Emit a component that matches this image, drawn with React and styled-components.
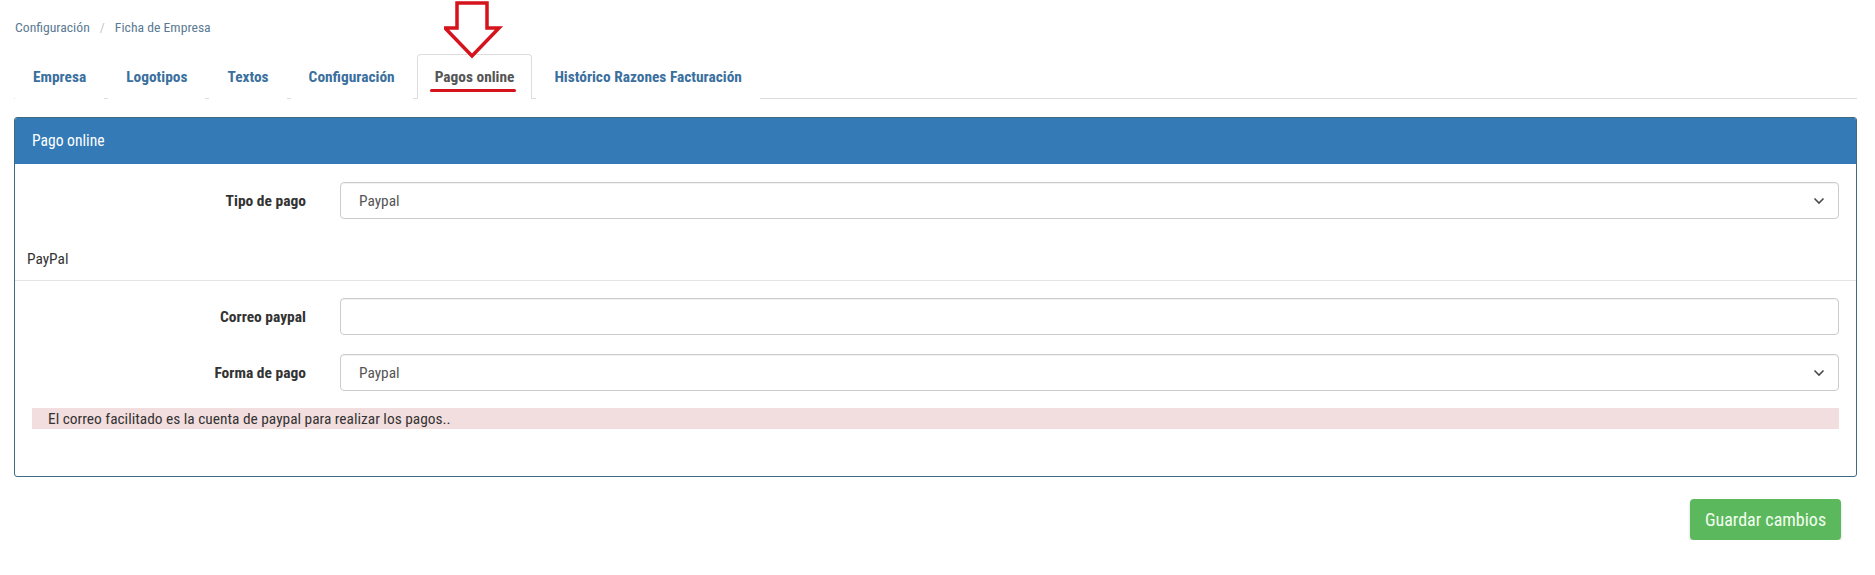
import React from "react";
import styled, { createGlobalStyle } from "styled-components";

const Global = createGlobalStyle`
  html, body { margin: 0; padding: 0; background: #fff; }
  body { font-family: "Roboto Condensed", Roboto, "Liberation Sans", sans-serif; color: #333; }
  * { box-sizing: border-box; }
`;

const Page = styled.div`
  padding: 0 18px 0 14px;
  width: 1875px;
`;

const Breadcrumb = styled.div`
  height: 54px;
  display: flex;
  align-items: center;
  gap: 10px;
  font-size: 13.7px;
  color: #5b7a93;
  padding-left: 1px;
`;

const Sep = styled.span`
  color: #c7c7c7;
`;

const Tabs = styled.div`
  display: flex;
  height: 45px;
  border-bottom: 1px solid #ddd;
  padding-left: 1px;
  gap: 4px;
`;

const Tab = styled.div`
  position: relative;
  padding: 0 17px;
  display: flex;
  align-items: center;
  font-size: 15.4px;
  font-weight: 700;
  color: ${(p) => (p.$active ? "#555" : "#3a6f9e")};
  border: 1px solid ${(p) => (p.$active ? "#ddd" : "transparent")};
  border-bottom: none;
  border-radius: 4px 4px 0 0;
  background: #fff;
  margin-bottom: -1px;
`;

const Underline = styled.span`
  position: absolute;
  left: 12px;
  right: 15px;
  bottom: 7px;
  height: 3px;
  border-radius: 2px;
  background: #d6121c;
`;

const Arrow = styled.svg`
  position: absolute;
  left: 26px;
  top: -54px;
`;

const Panel = styled.div`
  margin-top: 18px;
  border: 1px solid #3f6b80;
  border-radius: 3px;
  overflow: hidden;
`;

const PanelHeading = styled.div`
  height: 46px;
  background: #337ab7;
  color: #fff;
  font-size: 15.6px;
  display: flex;
  align-items: center;
  padding-left: 17px;
`;

const PanelBody = styled.div`
  padding: 18px 17px 47px 0;
`;

const Row = styled.div`
  display: flex;
  align-items: center;
  height: 37px;
  margin-bottom: ${(p) => p.$mb || 0}px;
`;

const Label = styled.label`
  width: 325px;
  padding-right: 34px;
  text-align: right;
  font-size: 15.5px;
  font-weight: 700;
  color: #333;
`;

const Field = styled.div`
  flex: 1;
  height: 37px;
  border: 1px solid #ccc;
  border-radius: 4px;
  box-shadow: inset 0 1px 1px rgba(0, 0, 0, 0.06);
  display: flex;
  align-items: center;
  padding: 0 12px 0 18px;
  font-size: 15.4px;
  color: #555;
`;

const FieldText = styled.span`
  flex: 1;
`;

const Legend = styled.div`
  height: 62px;
  display: flex;
  align-items: center;
  padding-left: 12px;
  padding-top: 19px;
  font-size: 15.4px;
  color: #333;
  border-bottom: 1px solid #e5e5e5;
  margin-right: -17px;
  margin-bottom: 17px;
`;

const Alert = styled.div`
  margin: 17px 0 0 17px;
  height: 21px;
  background: #f2dede;
  display: flex;
  align-items: center;
  padding-left: 16px;
  font-size: 15.4px;
  color: #333;
`;

const Footer = styled.div`
  display: flex;
  justify-content: flex-end;
  padding: 22px 16px 0 0;
`;

const SaveButton = styled.button`
  height: 41px;
  width: 151px;
  border: none;
  border-radius: 4px;
  background: #5cb85c;
  color: #f2fff0;
  font-family: "Roboto Condensed", Roboto, sans-serif;
  font-size: 18px;
  box-shadow: 0 2px 3px rgba(0, 0, 0, 0.18);
`;

const Chevron = () => (
  <svg width="14" height="14" viewBox="0 0 14 14">
    <path d="M2.5 4.5 L7 9 L11.5 4.5" fill="none" stroke="#4a4a4a" strokeWidth="1.6" />
  </svg>
);

const tabs = ["Empresa", "Logotipos", "Textos", "Configuración", "Pagos online", "Histórico Razones Facturación"];

export default function App() {
  return (
    <>
      <Global />
      <Page>
        <Breadcrumb>
          <span>Configuración</span>
          <Sep>/</Sep>
          <span>Ficha de Empresa</span>
        </Breadcrumb>
        <Tabs>
          {tabs.map((t) => (
            <Tab key={t} $active={t === "Pagos online"}>
              {t}
              {t === "Pagos online" && (
                <>
                  <Underline />
                  <Arrow width="60" height="60" viewBox="0 0 60 60">
                    <path d="M13 2 H43 V27 H55 L28 55 L1 27 H13 Z" fill="#fff" stroke="#d6121c" strokeWidth="3.5" strokeLinejoin="miter" />
                  </Arrow>
                </>
              )}
            </Tab>
          ))}
        </Tabs>
        <Panel>
          <PanelHeading>Pago online</PanelHeading>
          <PanelBody>
            <Row>
              <Label>Tipo de pago</Label>
              <Field>
                <FieldText>Paypal</FieldText>
                <Chevron />
              </Field>
            </Row>
            <Legend>PayPal</Legend>
            <Row $mb={19}>
              <Label>Correo paypal</Label>
              <Field />
            </Row>
            <Row>
              <Label>Forma de pago</Label>
              <Field>
                <FieldText>Paypal</FieldText>
                <Chevron />
              </Field>
            </Row>
            <Alert>El correo facilitado es la cuenta de paypal para realizar los pagos..</Alert>
          </PanelBody>
        </Panel>
        <Footer>
          <SaveButton>Guardar cambios</SaveButton>
        </Footer>
      </Page>
    </>
  );
}
